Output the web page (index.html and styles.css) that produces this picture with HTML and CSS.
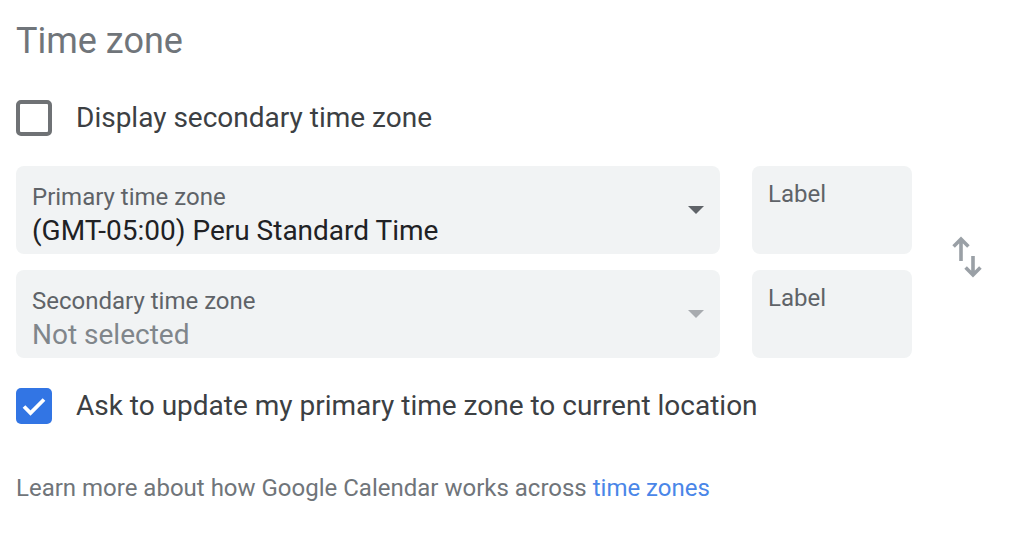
FILE: index.html
```html
<!DOCTYPE html>
<html lang="en">
<head>
<meta charset="utf-8">
<title>Time zone</title>
<link rel="stylesheet" href="styles.css">
</head>
<body>
<section class="tz">
  <h2 class="title">Time zone</h2>

  <label class="check-row row-first">
    <span class="box"></span>
    <span class="check-text">Display secondary time zone</span>
  </label>

  <div class="fields">
    <div class="field select">
      <div class="field-body">
        <div class="field-label">Primary time zone</div>
        <div class="field-value">(GMT-05:00) Peru Standard Time</div>
      </div>
      <span class="caret"></span>
    </div>
    <div class="field label-box"><div class="field-label">Label</div></div>

    <div class="swap">
      <svg width="48" height="48" viewBox="0 0 48 48" aria-hidden="true">
        <path d="M17 25V3.5M9.6 10.4L17 3 24.4 10.4" fill="none" stroke="#9aa0a6" stroke-width="3.6"/>
        <path d="M29 20V38.5M21.6 31.6L29 39 36.4 31.6" fill="none" stroke="#9aa0a6" stroke-width="3.6"/>
      </svg>
    </div>

    <div class="field select disabled">
      <div class="field-body">
        <div class="field-label">Secondary time zone</div>
        <div class="field-value muted">Not selected</div>
      </div>
      <span class="caret"></span>
    </div>
    <div class="field label-box"><div class="field-label">Label</div></div>
  </div>

  <label class="check-row row-second">
    <span class="box checked">
      <svg width="36" height="36" viewBox="0 0 36 36" aria-hidden="true">
        <path d="M8 18.5L14.5 25 28 11.5" fill="none" stroke="#fff" stroke-width="3.8"/>
      </svg>
    </span>
    <span class="check-text">Ask to update my primary time zone to current location</span>
  </label>

  <p class="footer">Learn more about how Google Calendar works across <a href="#" class="link">time zones</a></p>
</section>
</body>
</html>
```

FILE: styles.css
```css
* { box-sizing: border-box; }

body {
  margin: 0;
  background: #fff;
  font-family: Roboto, "Noto Sans", Arial, sans-serif;
  color: #3c4043;
}

.tz {
  padding: 21px 0 0 16px;
}

.title {
  margin: 0;
  font-size: 36px;
  line-height: 40px;
  font-weight: 400;
  color: #70757a;
  padding-left: 0;
}

.check-row {
  display: flex;
  align-items: center;
  gap: 24px;
  height: 36px;
}

.row-first { margin-top: 39px; }
.row-second { margin-top: 30px; }

.box {
  width: 36px;
  height: 36px;
  border: 4px solid #6f7275;
  border-radius: 5px;
  flex: none;
  display: flex;
  align-items: center;
  justify-content: center;
}

.box.checked {
  border: none;
  background: #3275e4;
}

.check-text {
  font-size: 28px;
  line-height: 36px;
  color: #3c4043;
}

.fields {
  margin-top: 30px;
  display: grid;
  grid-template-columns: 704px 160px 48px;
  grid-template-rows: 88px 88px;
  column-gap: 32px;
  row-gap: 16px;
}

.field {
  background: #f1f3f4;
  border-radius: 8px;
  height: 88px;
}

.select {
  display: flex;
  align-items: center;
  padding: 0 16px 0 16px;
}

.field-body {
  flex: 1;
  align-self: stretch;
  padding-top: 17px;
}

.field-label {
  font-size: 24px;
  line-height: 28px;
  color: #5f6368;
}

.field-value {
  margin-top: 2px;
  font-size: 28px;
  line-height: 36px;
  color: #202124;
}

.field-value.muted { color: #80868b; }

.caret {
  width: 0;
  height: 0;
  border-left: 8px solid transparent;
  border-right: 8px solid transparent;
  border-top: 8px solid #5f6368;
  flex: none;
}

.disabled .caret { border-top-color: #a8abaf; }

.label-box {
  padding: 14px 16px 0 16px;
}

.swap {
  grid-column: 3;
  grid-row: 1 / span 2;
  align-self: center;
  display: flex;
  margin-top: -4px;
}

.footer {
  margin: 48px 0 0 0;
  font-size: 24px;
  line-height: 32px;
  color: #70757a;
}

.link {
  color: #4a86e8;
  text-decoration: none;
}
```
